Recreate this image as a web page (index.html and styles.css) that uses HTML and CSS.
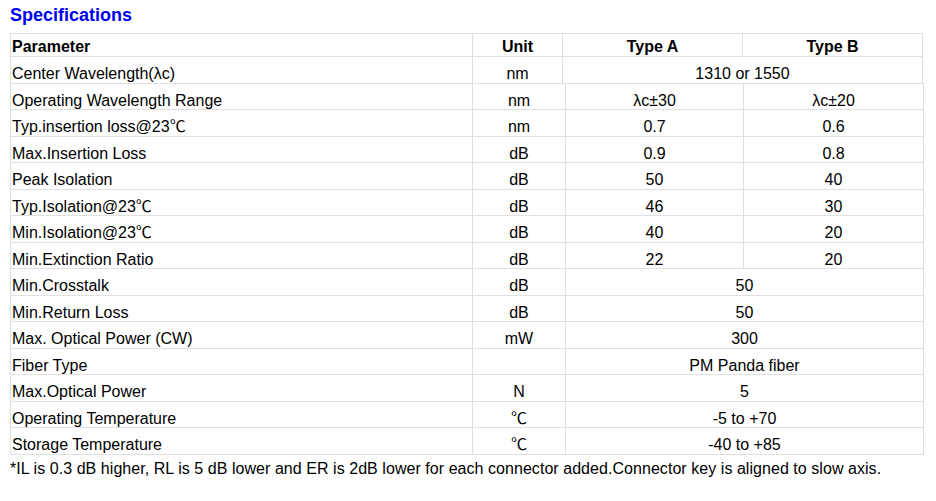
FILE: index.html
```html
<!DOCTYPE html>
<html>
<head>
<meta charset="utf-8">
<link rel="stylesheet" href="styles.css">
</head>
<body>
<h2 class="title">Specifications</h2>
<table class="spec spec-top">
  <colgroup><col class="c1"><col class="c2a"><col class="c3a"><col class="c4"></colgroup>
  <tr class="head"><td class="name">Parameter</td><td>Unit</td><td>Type A</td><td>Type B</td></tr>
  <tr><td class="name">Center Wavelength(λc)</td><td>nm</td><td colspan="2">1310 or 1550</td></tr>
</table>
<table class="spec spec-body">
  <colgroup><col class="c1"><col class="c2b"><col class="c3b"><col class="c4"></colgroup>
  <tr><td class="name">Operating Wavelength Range</td><td>nm</td><td>λc±30</td><td>λc±20</td></tr>
  <tr><td class="name">Typ.insertion loss@23℃</td><td>nm</td><td>0.7</td><td>0.6</td></tr>
  <tr><td class="name">Max.Insertion Loss</td><td>dB</td><td>0.9</td><td>0.8</td></tr>
  <tr><td class="name">Peak Isolation</td><td>dB</td><td>50</td><td>40</td></tr>
  <tr><td class="name">Typ.Isolation@23℃</td><td>dB</td><td>46</td><td>30</td></tr>
  <tr><td class="name">Min.Isolation@23℃</td><td>dB</td><td>40</td><td>20</td></tr>
  <tr><td class="name">Min.Extinction Ratio</td><td>dB</td><td>22</td><td>20</td></tr>
  <tr><td class="name">Min.Crosstalk</td><td>dB</td><td colspan="2">50</td></tr>
  <tr><td class="name">Min.Return Loss</td><td>dB</td><td colspan="2">50</td></tr>
  <tr><td class="name">Max. Optical Power (CW)</td><td>mW</td><td colspan="2">300</td></tr>
  <tr><td class="name">Fiber Type</td><td></td><td colspan="2">PM Panda fiber</td></tr>
  <tr><td class="name">Max.Optical Power</td><td>N</td><td colspan="2">5</td></tr>
  <tr><td class="name">Operating Temperature</td><td>℃</td><td colspan="2">-5 to +70</td></tr>
  <tr><td class="name">Storage Temperature</td><td>℃</td><td colspan="2">-40 to +85</td></tr>
</table>
<p class="note">*IL is 0.3 dB higher, RL is 5 dB lower and ER is 2dB lower for each connector added.Connector key is aligned to slow axis.</p>
</body>
</html>
```
FILE: styles.css
```css
html, body {
  margin: 0;
  padding: 0;
  background: #ffffff;
}
body {
  padding: 0 10px;
  font-family: "Liberation Sans", Arial, "Noto Sans CJK SC", sans-serif;
  color: #000000;
  font-size: 16px;
}
.title {
  margin: 0;
  padding-top: 5px;
  height: 33px;
  box-sizing: border-box;
  font-size: 18px;
  line-height: 20px;
  font-weight: bold;
  color: #0000f0;
}
.spec {
  border-collapse: collapse;
  table-layout: fixed;
  width: 913px;
  font-size: 16px;
}
.spec td {
  border: 1px solid #e0e0e0;
  text-align: center;
  padding: 9px 0 0 0;
  vertical-align: middle;
  line-height: 16px;
  white-space: nowrap;
  overflow: hidden;
}
.spec td.name {
  text-align: left;
  padding-left: 1px;
}
.spec tr {
  height: 26.5px;
}
.spec tr.head {
  height: 23px;
}
.spec tr.head td {
  font-weight: bold;
  padding-top: 4px;
}
.spec-body {
  margin-top: -1px;
}
.c1 { width: 462px; }
.c2a { width: 90px; }
.c3a { width: 180px; }
.c2b { width: 93px; }
.c3b { width: 178px; }
.c4 { width: 180px; }
.note {
  margin: 0;
  padding-top: 5px;
  font-size: 16px;
  line-height: 18px;
  letter-spacing: 0.05px;
}
```
